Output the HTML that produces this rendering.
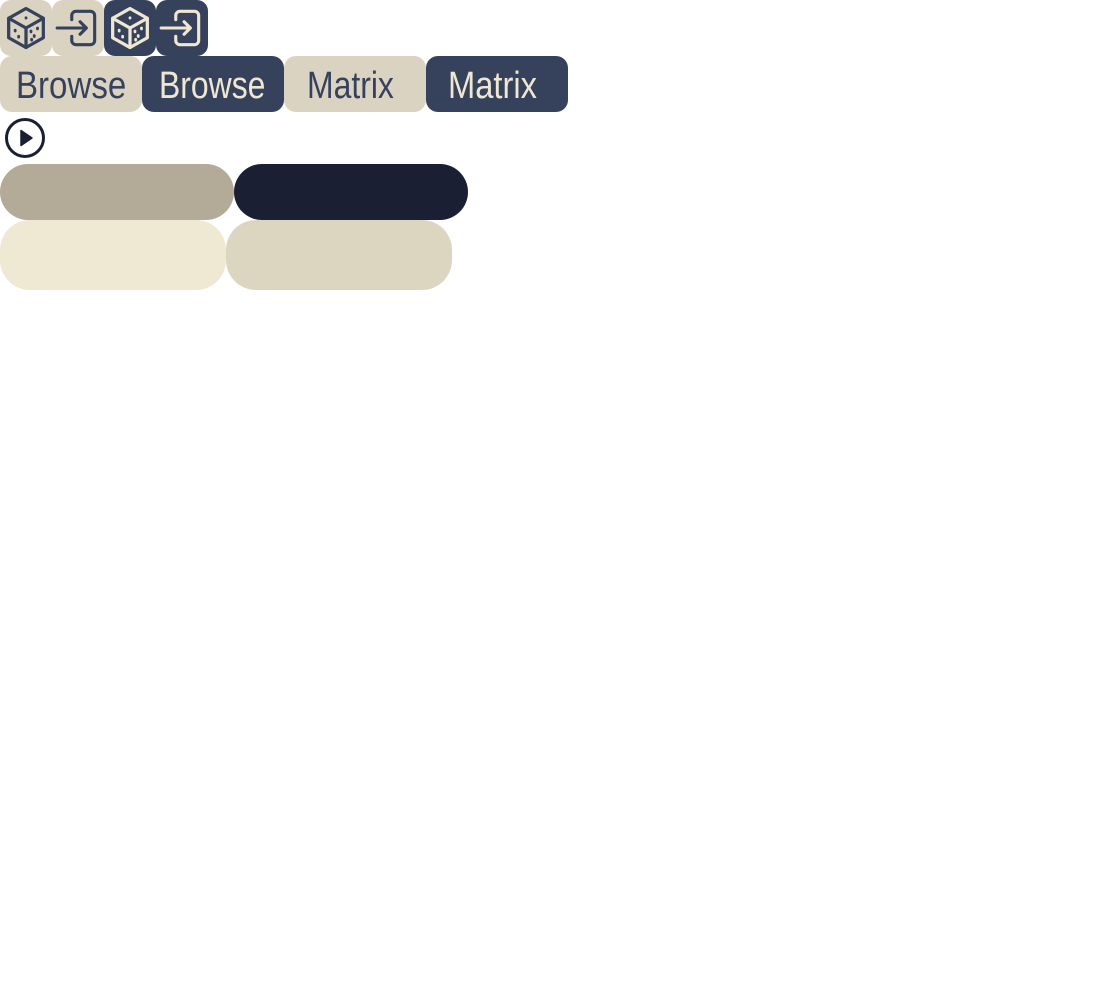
<!DOCTYPE html>
<html><head><meta charset="utf-8"><style>
body{margin:0;background:#fff;width:1120px;height:1000px;position:relative;overflow:hidden;font-family:"Liberation Sans",sans-serif}
.a{position:absolute;box-sizing:border-box}
.t{width:52px;height:56px;border-radius:11px;display:flex;align-items:center;justify-content:center}
.l{background:#dbd3c2;color:#36425c}
.d{background:#36425c;color:#efe7d2}
.b{height:56px;width:142px;border-radius:12px;top:56px}
.b span{position:absolute;top:10px;font-size:38px;transform:scaleX(0.84);transform-origin:left top;white-space:nowrap;line-height:40px}
</style></head><body>
<div class="a t l" style="left:0;top:0">
<svg width="52" height="52" viewBox="0 0 24 24" fill="none" stroke="currentColor" stroke-width="1.5" stroke-linejoin="round" stroke-linecap="round"><path d="M12 3L20 7.5V16.5L12 21L4 16.5V7.5Z"/><path d="M4 7.5L12 12L20 7.5M12 12V21"/><path d="M12 7.3v.1M7 13v.4M8.6 15.8v.4M14.3 13.4v.4M17.3 12v.4M15.8 15.5v.4M14.6 17.2v.4" stroke-width="1.3"/></svg></div>
<div class="a t l" style="left:52px;top:0">
<svg width="50" height="50" viewBox="0 0 24 24" fill="none" stroke="currentColor" stroke-width="1.5" stroke-linejoin="round" stroke-linecap="round"><path d="M9 8V6a2 2 0 0 1 2-2h7a2 2 0 0 1 2 2v12a2 2 0 0 1-2 2h-7a2 2 0 0 1-2-2v-2"/><path d="M2 12h14M13 9l3 3-3 3"/></svg></div>
<div class="a t d" style="left:104px;top:0">
<svg width="52" height="52" viewBox="0 0 24 24" fill="none" stroke="currentColor" stroke-width="1.5" stroke-linejoin="round" stroke-linecap="round"><path d="M12 3L20 7.5V16.5L12 21L4 16.5V7.5Z"/><path d="M4 7.5L12 12L20 7.5M12 12V21"/><path d="M12 7.3v.1M7 13v.4M8.6 15.8v.4M14.3 13.4v.4M17.3 12v.4M15.8 15.5v.4M14.6 17.2v.4" stroke-width="1.3"/></svg></div>
<div class="a t d" style="left:156px;top:0">
<svg width="50" height="50" viewBox="0 0 24 24" fill="none" stroke="currentColor" stroke-width="1.5" stroke-linejoin="round" stroke-linecap="round"><path d="M9 8V6a2 2 0 0 1 2-2h7a2 2 0 0 1 2 2v12a2 2 0 0 1-2 2h-7a2 2 0 0 1-2-2v-2"/><path d="M2 12h14M13 9l3 3-3 3"/></svg></div>

<div class="a b l" style="left:0"><span style="left:16px;transform:scaleX(0.87)">Browse</span></div>
<div class="a b d" style="left:142px"><span style="left:17px">Browse</span></div>
<div class="a b l" style="left:284px"><span style="left:23px">Matrix</span></div>
<div class="a b d" style="left:426px"><span style="left:22px;transform:scaleX(0.86)">Matrix</span></div>

<svg class="a" style="left:4px;top:117px" width="42" height="42" viewBox="0 0 42 42"><circle cx="21" cy="21" r="18.5" fill="none" stroke="#1a1f33" stroke-width="3"/><path d="M17 13.5L28 21L17 28.5Z" fill="#1a1f33" stroke="#1a1f33" stroke-width="1.5" stroke-linejoin="round"/></svg>

<div class="a" style="left:0;top:164px;width:234px;height:56px;border-radius:28px;background:#b3aa98"></div>
<div class="a" style="left:234px;top:164px;width:234px;height:56px;border-radius:28px;background:#1a1f33"></div>
<div class="a" style="left:0;top:220px;width:226px;height:70px;border-radius:30px;background:#efe8d3"></div>
<div class="a" style="left:226px;top:220px;width:226px;height:70px;border-radius:30px;background:#dcd6c1"></div>
</body></html>
